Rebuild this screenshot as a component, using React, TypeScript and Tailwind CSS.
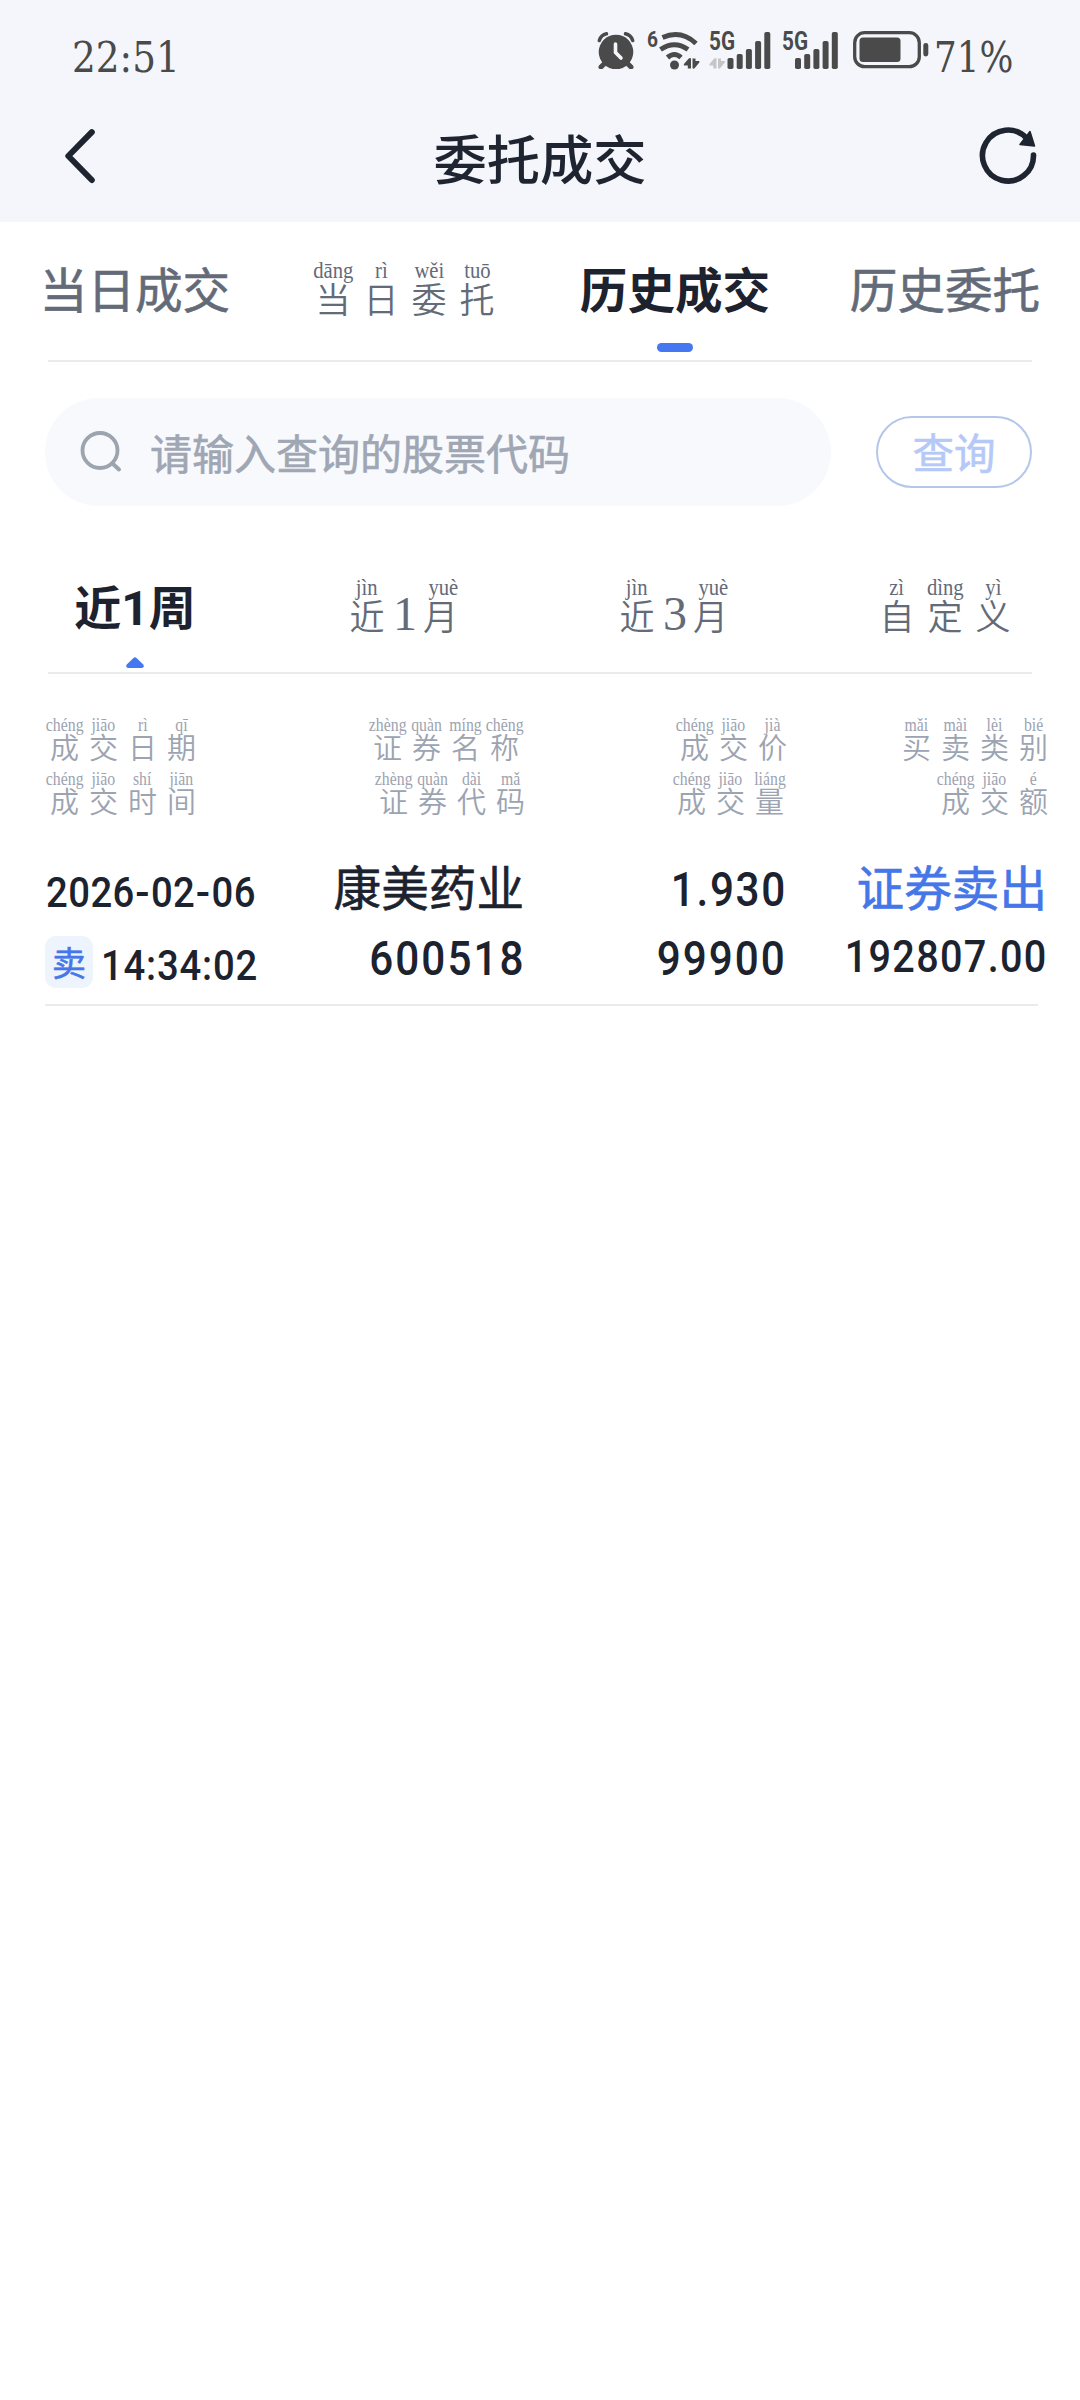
import React from "react";

type Syllable = { c: string; p?: string };

const CJK = "font-['Noto_Sans_CJK_SC',sans-serif]";
const STURDY = "font-normal [-webkit-text-stroke:0.6px_currentColor]";
const DIGITS = "font-['Roboto',sans-serif] font-medium whitespace-nowrap leading-none";

function parse(text: string): Syllable[] {
  return text.split(" ").map((pair) => {
    const [c, p] = pair.split("/");
    return { c, p };
  });
}

/* Large annotated label used in the two tab bars */
function TabRuby({ text }: { text: string }) {
  return (
    <div className="flex justify-center text-[#636a78]">
      {parse(text).map((s, i) => (
        <div key={i} className={s.p ? "flex w-[48px] flex-col items-center" : "flex w-[28px] flex-col items-center"}>
          <span className="h-[22px] scale-x-[0.86] whitespace-nowrap font-['Liberation_Serif',serif] text-[24px] leading-none">
            {s.p ?? ""}
          </span>
          {s.p ? (
            <span
              className={
                s.c === "月"
                  ? "-ml-[5px] font-['Noto_Sans_CJK_SC',sans-serif] text-[35px] font-[350] leading-[36px]"
                  : "font-['Noto_Sans_CJK_SC',sans-serif] text-[35px] font-[350] leading-[36px]"
              }
            >
              {s.c}
            </span>
          ) : (
            <span className="-mt-[7px] font-['Liberation_Serif',serif] text-[48px] leading-none">{s.c}</span>
          )}
        </div>
      ))}
    </div>
  );
}

/* Small annotated label used in the table header */
function HeadRuby({ text, className = "" }: { text: string; className?: string }) {
  return (
    <div className={`flex text-[#9ca3b1] ${className}`}>
      {parse(text).map((s, i) => (
        <div key={i} className="flex w-[39px] flex-col items-center">
          <span className="h-[17px] scale-x-[0.83] whitespace-nowrap font-['Liberation_Serif',serif] text-[19px] leading-none">
            {s.p}
          </span>
          <span className="font-['Noto_Sans_CJK_SC',sans-serif] text-[29px] font-[350] leading-none">{s.c}</span>
        </div>
      ))}
    </div>
  );
}

function AlarmIcon() {
  return (
    <svg className="h-[38px] w-[38px]" viewBox="0 0 38 38" fill="none">
      <circle cx="19" cy="21" r="17.3" fill="#4a4a4a" />
      <path d="M8 32L4 36M30 32L34 36" stroke="#4a4a4a" strokeWidth="5" strokeLinecap="round" />
      <path d="M2.300 9.500Q4 4 9.500 2.800M28.500 2.800Q34 4 35.700 9.500" stroke="#4a4a4a" strokeWidth="3.500" strokeLinecap="round" />
      <path d="M18.500 13V21.500L24 27" stroke="#f4f6fb" strokeWidth="3.600" strokeLinecap="round" strokeLinejoin="round" />
    </svg>
  );
}

function DataArrows({ x, color }: { x: number; color: string }) {
  return (
    <g transform={`translate(${x} 28)`} fill={color}>
      <path d="M7.500 0.500V10.500H4.300V7.500H0.800Q-0.200 7 0.500 6L5 0.800Q6.500-0.500 7.500 0.500Z" />
      <path d="M9 0.500H12V3H15.500Q16.500 3.500 15.800 4.500L11.500 9.800Q10 11.500 9 10Z" />
    </g>
  );
}

function WifiIcon() {
  return (
    <svg className="h-[40px] w-[54px] overflow-visible" viewBox="0 0 54 40" fill="none">
      <text x="0" y="16.500" fontSize="22" fontWeight="700" fontFamily="Roboto, sans-serif" fill="#4a4a4a" textLength="11" lengthAdjust="spacingAndGlyphs">
        6
      </text>
      <path d="M15.500 7.500Q34-0.500 49 13.500M13.500 19.500Q27.500 10 41 19.500M20.500 27.500Q27.500 21.500 34 27.500" stroke="#4a4a4a" strokeWidth="5" />
      <circle cx="27.500" cy="35" r="4.500" fill="#4a4a4a" />
      <DataArrows x={36.5} color="#4a4a4a" />
    </svg>
  );
}

const BARS = [
  [0, 28],
  [9.2, 24],
  [18.4, 19],
  [27.6, 11],
  [36.8, 2],
];

function SignalIcon({ data, offset }: { data?: boolean; offset: number }) {
  return (
    <svg className="h-[40px] w-[62px] overflow-visible" viewBox="0 0 62 40">
      <text x="0" y="20" fontSize="25" fontWeight="700" fontFamily="Roboto, sans-serif" fill="#4a4a4a" textLength="26" lengthAdjust="spacingAndGlyphs">
        5G
      </text>
      {BARS.map(([x, y]) => (
        <rect key={x} x={offset + x} y={y} width="6" height={39 - y} rx="1.800" fill="#4a4a4a" />
      ))}
      {data && <DataArrows x={0} color="#c3c5c9" />}
    </svg>
  );
}

function BatteryIcon() {
  return (
    <svg className="h-[38px] w-[76px]" viewBox="0 0 76 38" fill="none">
      <rect x="1.700" y="1.700" width="64.600" height="34" rx="10" stroke="#4a4a4a" strokeWidth="3.300" />
      <rect x="6.500" y="6.500" width="41" height="24.500" rx="3.500" fill="#4a4a4a" />
      <rect x="70.300" y="12" width="5" height="13.500" rx="2.400" fill="#4a4a4a" />
    </svg>
  );
}

function Header() {
  return (
    <header className="h-[222px] bg-[#f4f6fb]">
      <div className="flex h-[100px] items-start pl-[72px] text-[#4a4a4a]">
        <span className="mt-[37px] w-[108px] origin-left scale-x-[0.88] whitespace-nowrap font-['DejaVu_Serif',serif] text-[42.500px] leading-none">
          22:51
        </span>
        <div className="ml-[416.500px] mt-[31px] flex">
          <AlarmIcon />
          <div className="-mt-px ml-[12.500px] flex">
            <WifiIcon />
          </div>
          <div className="-mt-px ml-[7.500px] flex">
            <SignalIcon data offset={18.5} />
          </div>
          <div className="-mt-px ml-[11.500px] flex">
            <SignalIcon offset={13} />
          </div>
          <div className="ml-[9px] flex">
            <BatteryIcon />
          </div>
        </div>
        <span className="ml-[5px] mt-[37px] origin-left scale-x-[0.84] whitespace-nowrap font-['DejaVu_Serif',serif] text-[42.500px] leading-none">
          71%
        </span>
      </div>
      <div className="flex items-start justify-between pl-[62px] pr-[43px] pt-[25px]">
        <svg className="h-[60px] w-[34px]" viewBox="0 0 34 60" fill="none">
          <path d="M29.800 7.200L6.300 31L29.800 55" stroke="#1e2430" strokeWidth="6" strokeLinecap="round" strokeLinejoin="round" />
        </svg>
        <h1 className={`${CJK} ml-[7px] mt-[4.500px] text-[53.300px] font-medium leading-none text-[#1e2430]`}>委托成交</h1>
        <svg className="h-[60px] w-[60px]" viewBox="0 0 60 60" fill="none">
          <path d="M56.500 30A25.500 25.500 0 1 1 49.500 13" stroke="#1e2430" strokeWidth="5.600" strokeLinecap="round" />
          <path d="M53 6.500L57.500 21L43 19.500Z" fill="#1e2430" stroke="#1e2430" strokeWidth="1.500" strokeLinejoin="round" />
        </svg>
      </div>
    </header>
  );
}

function Tabs() {
  return (
    <nav className="relative h-[140px]">
      <div className={`${CJK} grid grid-cols-4 text-center text-[47.600px] leading-none text-[#636a78]`}>
        <span className={`${STURDY} pt-[42px]`}>当日成交</span>
        <div className="pt-[36px]">
          <TabRuby text="当/dāng 日/rì 委/wěi 托/tuō" />
        </div>
        <div className="flex flex-col items-center pt-[42px]">
          <span className="font-bold text-[#1c222e]">历史成交</span>
          <span className="mt-[31.500px] h-[9px] w-[36px] rounded-[4.500px] bg-[#4577f0]" />
        </div>
        <span className={`${STURDY} pt-[42px]`}>历史委托</span>
      </div>
      <div className="absolute bottom-0 left-[48px] right-[48px] h-[2px] bg-[#ebebeb]" />
    </nav>
  );
}

function SearchBar() {
  return (
    <div className="flex items-center pl-[45px] pt-[36px]">
      <div className="flex h-[108px] w-[786px] items-center rounded-full bg-[#f7f9fc] pl-[35px]">
        <svg className="h-[44px] w-[44px]" viewBox="0 0 44 44" fill="none">
          <circle cx="20" cy="20.500" r="17.500" stroke="#9ca4af" strokeWidth="3.800" />
          <path d="M32.500 33.500L39 39.500" stroke="#9ca4af" strokeWidth="4" strokeLinecap="round" />
        </svg>
        <span className={`${CJK} ${STURDY} ml-[26px] text-[42px] leading-none text-[#9fa6b4]`}>请输入查询的股票代码</span>
      </div>
      <button className={`${CJK} ${STURDY} ml-[45px] flex h-[72px] w-[156px] items-center justify-center rounded-full border-2 border-[#b4c6ea] text-[41.500px] leading-none text-[#b5c9f8]`}>
        查询
      </button>
    </div>
  );
}

function RangeTabs() {
  return (
    <div className="relative h-[168px]">
      <div className="grid grid-cols-4">
        <div className="flex flex-col items-center pt-[75px]">
          <span className={`${CJK} h-[47px] whitespace-nowrap text-[47px] font-bold leading-none text-[#1c222e]`}>
            近<span className="font-['Roboto',sans-serif] text-[48px]">1</span>周
          </span>
          <svg className="mt-[29px] h-[11px] w-[18px]" viewBox="0 0 18 12" preserveAspectRatio="none">
            <path d="M7.500 1Q9-0.500 10.500 1L17 8Q19 11.500 15.500 12H2.500Q-1 11.500 1 8Z" fill="#4577f0" />
          </svg>
        </div>
        <div className="pt-[69px]">
          <TabRuby text="近/jìn 1 月/yuè" />
        </div>
        <div className="pt-[69px]">
          <TabRuby text="近/jìn 3 月/yuè" />
        </div>
        <div className="pt-[69px]">
          <TabRuby text="自/zì 定/dìng 义/yì" />
        </div>
      </div>
      <div className="absolute bottom-0 left-[48px] right-[48px] h-[2px] bg-[#ebebeb]" />
    </div>
  );
}

function TradeDate() {
  return (
    <div className={`${DIGITS} ml-px w-fit origin-left scale-x-[0.9] text-[42.500px] tracking-[0.500px]`}>
      {"2026-02-06".split("-").map((part, i) => (
        <React.Fragment key={i}>
          {i > 0 && <span className="mx-[1.500px] inline-block scale-x-[1.1]">-</span>}
          {part}
        </React.Fragment>
      ))}
    </div>
  );
}

function TradeTable() {
  return (
    <section>
      <div className="grid grid-cols-[211px_268px_261px_262px] gap-y-[8px] pl-[45px] pt-[40.500px]">
        <HeadRuby text="成/chéng 交/jiāo 日/rì 期/qī" />
        <HeadRuby className="justify-end" text="证/zhèng 券/quàn 名/míng 称/chēng" />
        <HeadRuby className="-mr-[7px] justify-end" text="成/chéng 交/jiāo 价/jià" />
        <HeadRuby className="-mr-[6px] justify-end" text="买/mǎi 卖/mài 类/lèi 别/bié" />
        <HeadRuby text="成/chéng 交/jiāo 时/shí 间/jiān" />
        <HeadRuby className="-mr-[6px] justify-end" text="证/zhèng 券/quàn 代/dài 码/mǎ" />
        <HeadRuby className="-mr-[4px] justify-end" text="成/chéng 交/jiāo 量/liáng" />
        <HeadRuby className="-mr-[6px] justify-end" text="成/chéng 交/jiāo 额/é" />
      </div>
      <div className="grid h-[189.500px] grid-cols-[211px_268px_261px_262px] pl-[45px] text-[#1c222e]">
        <div className="pt-[57.500px]">
          <TradeDate />
          <div className="mt-[21.500px] flex items-start">
            <span className={`${CJK} ${STURDY} flex h-[52px] w-[48px] shrink-0 items-center justify-center rounded-[11px] bg-[#eef4fe] text-[34px] leading-none text-[#4577e8]`}>
              卖
            </span>
            <span className={`${DIGITS} ml-[8px] mt-[8.500px] origin-left scale-x-[0.9] text-[42.500px] tracking-[0.900px]`}>14:34:02</span>
          </div>
        </div>
        <div className="flex flex-col items-end pt-[47px]">
          <span className={`${CJK} ${STURDY} text-[47.600px] leading-none`}>康美药业</span>
          <span className={`${DIGITS} -mr-[1px] mt-[25.500px] origin-right scale-x-[0.88] text-[48px] tracking-[2.300px]`}>600518</span>
        </div>
        <div className="-mr-[2px] flex flex-col items-end pt-[51.500px]">
          <span className={`${DIGITS} origin-right scale-x-[0.88] text-[48px] tracking-[1.900px]`}>1.930</span>
          <span className={`${DIGITS} mt-[21px] origin-right scale-x-[0.88] text-[48px] tracking-[2.300px]`}>99900</span>
        </div>
        <div className="flex flex-col items-end pt-[47px]">
          <span className={`${CJK} ${STURDY} text-[47.600px] leading-none text-[#4577e8]`}>证券卖出</span>
          <span className={`${DIGITS} -mr-[1px] mt-[24.500px] origin-right scale-x-[0.88] text-[45px] tracking-[1.500px]`}>192807.00</span>
        </div>
      </div>
      <div className="ml-[45px] mr-[42px] h-[2px] bg-[#ebebeb]" />
    </section>
  );
}

export default function App() {
  return (
    <main className="h-[2400px] w-[1080px] overflow-hidden bg-white">
      <Header />
      <Tabs />
      <SearchBar />
      <RangeTabs />
      <TradeTable />
    </main>
  );
}
